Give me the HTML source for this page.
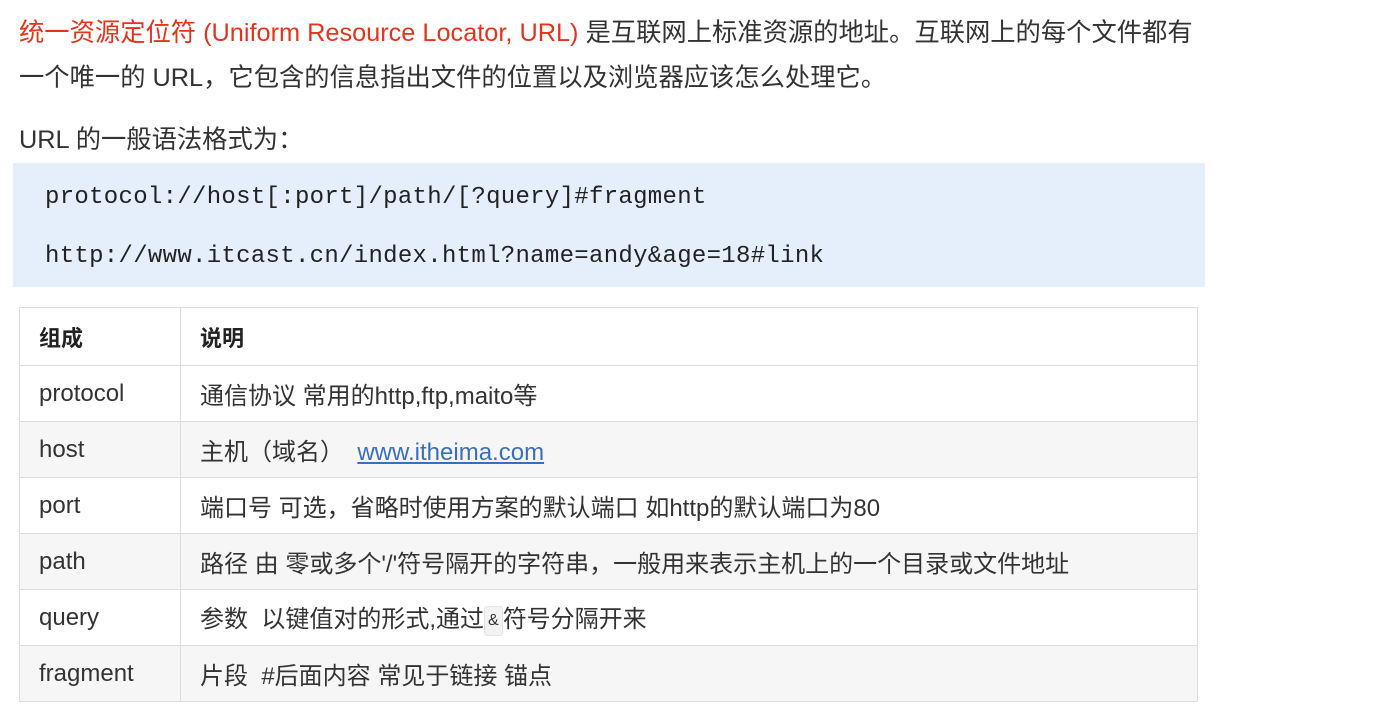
<!DOCTYPE html>
<html><head><meta charset="utf-8"><style>
body{margin:0;background:#fff;width:1390px;height:711px;overflow:hidden;font-family:"Liberation Sans","Noto Sans CJK SC",sans-serif;color:#333;}
.p{position:absolute;left:19px;font-size:25.3px;white-space:nowrap;letter-spacing:0;line-height:30px}
.red{color:#e5341b}
.code{position:absolute;left:13px;top:163px;width:1192px;height:124px;background:#e5eefb}
.code div{position:absolute;left:32px;font-family:"Liberation Mono",monospace;font-size:24px;color:#222;white-space:nowrap;letter-spacing:0.3px}
table{position:absolute;left:19px;top:307px;width:1179px;border-collapse:collapse;font-size:24px}
td{border:1px solid #ddd;height:55px;padding:0 0 0 19px;color:#333;vertical-align:middle}
tr.g td{background:#f6f6f6}
th{border:1px solid #ddd;height:55px;text-align:left;padding-left:19px;font-size:22px;color:#222}
a{color:#3a6fc0}
.amp{display:inline-block;background:#f3f3f3;border:1px solid #e3e3e3;border-radius:3px;font-size:16px;padding:0 3px;line-height:28px;vertical-align:middle}
</style></head><body>
<div class="p" style="top:18px"><span class="red">统一资源定位符 (Uniform Resource Locator, URL)</span> 是互联网上标准资源的地址。互联网上的每个文件都有</div>
<div class="p" style="top:63px">一个唯一的 URL，它包含的信息指出文件的位置以及浏览器应该怎么处理它。</div>
<div class="p" style="top:125px">URL 的一般语法格式为：</div>
<div class="code">
<div style="top:21px">protocol://host[:port]/path/[?query]#fragment</div>
<div style="top:80px">http://www.itcast.cn/index.html?name=andy&amp;age=18#link</div>
</div>
<table>
<tr><th style="width:140px">组成</th><th>说明</th></tr>
<tr><td>protocol</td><td>通信协议 常用的http,ftp,maito等</td></tr>
<tr class="g"><td>host</td><td>主机（域名）&nbsp;&nbsp;<a href="#">www.itheima.com</a></td></tr>
<tr><td>port</td><td>端口号 可选，省略时使用方案的默认端口 如http的默认端口为80</td></tr>
<tr class="g"><td>path</td><td>路径 由 零或多个'/'符号隔开的字符串，一般用来表示主机上的一个目录或文件地址</td></tr>
<tr><td>query</td><td>参数&nbsp; 以键值对的形式,通过<span class="amp">&amp;</span>符号分隔开来</td></tr>
<tr class="g"><td>fragment</td><td>片段&nbsp; #后面内容 常见于链接 锚点</td></tr>
</table>
</body></html>
